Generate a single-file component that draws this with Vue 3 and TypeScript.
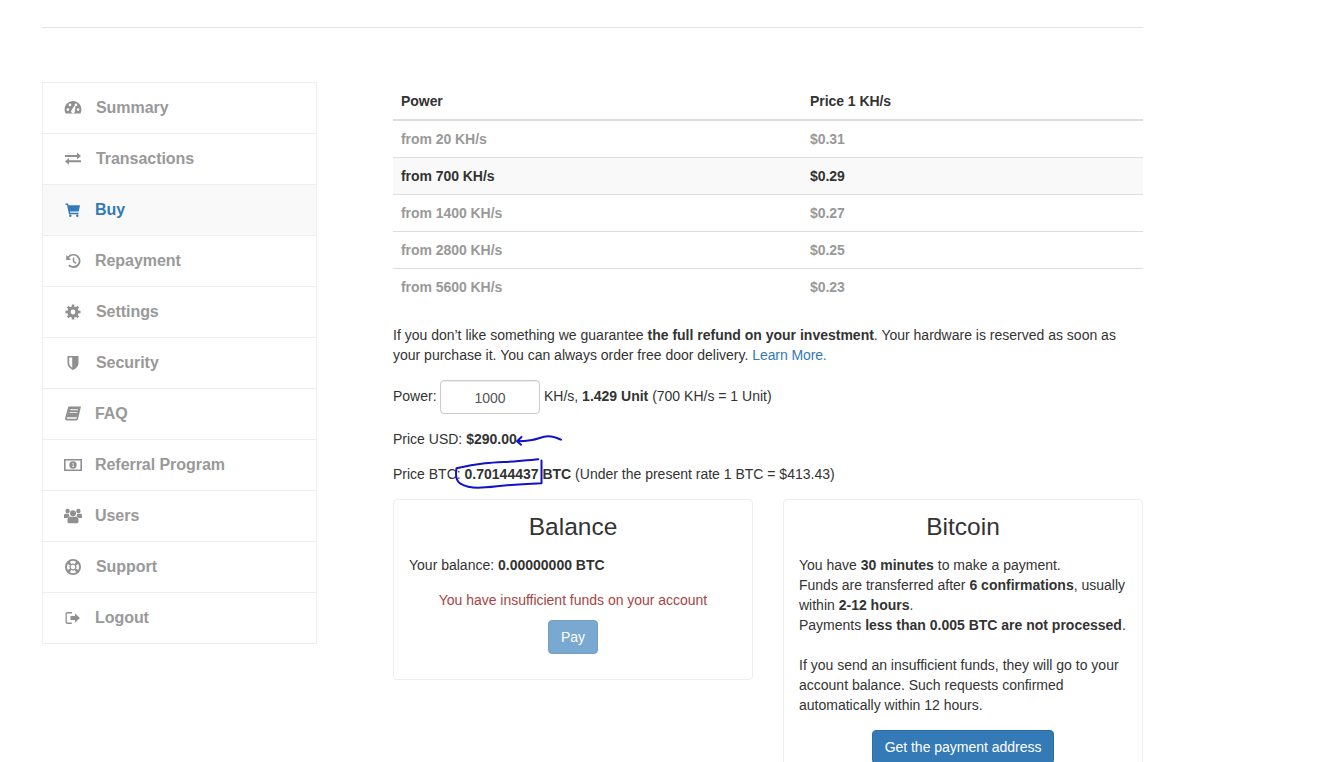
<script setup lang="ts">
function gear(cx: number, cy: number, ro: number, ri: number, hole: number, teeth: number): string {
  let d = ''
  const step = (Math.PI * 2) / teeth
  for (let i = 0; i < teeth; i++) {
    const a = i * step
    const pts: [number, number][] = [
      [ri, a - step * 0.5],
      [ri, a - step * 0.27],
      [ro, a - step * 0.2],
      [ro, a + step * 0.2],
      [ri, a + step * 0.27],
    ]
    for (const [r, t] of pts) {
      d += (d ? 'L' : 'M') + (cx + r * Math.cos(t)).toFixed(2) + ' ' + (cy + r * Math.sin(t)).toFixed(2)
    }
  }
  d += `Z M${cx - hole} ${cy} a${hole} ${hole} 0 1 0 ${hole * 2} 0 a${hole} ${hole} 0 1 0 ${-hole * 2} 0Z`
  return d
}

interface NavItem {
  label: string
  d: string
  wide?: boolean
  active?: boolean
}

const nav: NavItem[] = [
  {
    label: 'Summary',
    wide: true,
    d: 'M9 2C4.300 2 .6 5.800.6 10.500c0 1.400.3 2.600.9 3.700.1.2.3.3.5.3h14c.2 0 .4-.1.5-.3.6-1.100.9-2.300.9-3.700C17.400 5.800 13.700 2 9 2ZM3.900 11.900a1.300 1.300 0 1 1 0-2.600 1.300 1.300 0 0 1 0 2.600Zm2.100-4.700a1.300 1.300 0 1 1 0-2.600 1.300 1.300 0 0 1 0 2.600Zm4.800 5.800a1.900 1.900 0 1 1-3.300-1.800l3-4.700.9.300-.4 5.300c0 .3-.1.600-.2.900Zm1.200-5.800a1.300 1.300 0 1 1 0-2.600 1.300 1.300 0 0 1 0 2.600Zm2.100 4.700a1.300 1.300 0 1 1 0-2.600 1.300 1.300 0 0 1 0 2.600Z',
  },
  {
    label: 'Transactions',
    wide: true,
    d: 'M1 5h12V2.600L17 6l-4 3.200V7H1ZM17 10.200H5V8L1 11.400 5 14.800v-2.600h12Z',
  },
  {
    label: 'Buy',
    active: true,
    d: 'M1.500 2.500h2.600l.4 1.700H16l-1.300 6.300H5.900l.3 1.300h8.300v1.400H5l-2-9.300H1.500ZM6.300 13.500a1.200 1.200 0 1 1 0 2.400 1.200 1.200 0 0 1 0-2.400Zm7 0a1.200 1.200 0 1 1 0 2.400 1.200 1.200 0 0 1 0-2.400Z',
  },
  {
    label: 'Repayment',
    d: 'M9.500 2a7 7 0 1 1-5.200 11.700l1.300-1.200A5.300 5.300 0 1 0 5 5.900L7 7.900H2.200V2.900l1.600 1.500A7 7 0 0 1 9.500 2ZM8.800 5.500h1.500v3.700l2.300 1.500-.8 1.200-3-1.900Z',
  },
  { label: 'Settings', wide: true, d: gear(9, 9, 7.600, 5.600, 2.400, 8) },
  {
    label: 'Security',
    wide: true,
    d: 'M3.500 2h11v7.200c0 3.300-3.200 5.500-5.500 6.800-2.300-1.300-5.500-3.500-5.500-6.800ZM5.200 3.600V9.200c0 2 1.900 3.600 3 4.500V3.600Z',
  },
  {
    label: 'FAQ',
    d: 'M5 1.500h12l-3 12.500c-.2.800-.8 1.500-1.700 1.500H2.800C1.500 15.500.8 14.500 1.100 13.300L4 2.500c.1-.6.5-1 1-1ZM6.300 4.300l-.2.900h7.700l.2-.9Zm-.7 2.600-.2.900h7.700l.2-.9ZM3.600 12.200c-.6 0-.9.400-.9.800s.3.800.9.800h8.900l.5-1.600Z',
  },
  {
    label: 'Referral Program',
    d: 'M0 3h18v12H0ZM1.600 4.600v8.800h14.800V4.600ZM9 5.300a3.700 3.700 0 1 1 0 7.400 3.700 3.700 0 0 1 0-7.400ZM8.300 7.300v.7h.5v2.300h-.6v.7h1.700v-.7h-.4V7.300Z',
  },
  {
    label: 'Users',
    d: 'M3.600 1.800a2.200 2.200 0 1 1 0 4.400 2.200 2.200 0 0 1 0-4.400Zm10.800 0a2.200 2.200 0 1 1 0 4.400 2.200 2.200 0 0 1 0-4.400ZM9 3.200a3 3 0 1 1 0 6 3 3 0 0 1 0-6ZM0 11V8.300c0-1 .6-1.600 1.600-1.600h3c.2 1 .6 1.900 1.300 2.500-1.200.4-2.100 1-2.400 1.800Zm18 0V8.300c0-1-.6-1.600-1.600-1.600h-3c-.2 1-.6 1.900-1.300 2.500 1.200.4 2.100 1 2.400 1.800ZM6.300 9.700h5.400c1.800 0 2.800 1.100 2.800 2.800v2.200c0 .8-.7 1.500-1.500 1.500H5c-.8 0-1.500-.7-1.500-1.500v-2.200c0-1.700 1-2.800 2.800-2.800Z',
  },
  {
    label: 'Support',
    wide: true,
    d: 'M9 1a8 8 0 1 1 0 16A8 8 0 0 1 9 1Zm-3.100 2.700 1.300 2.200a3.700 3.700 0 0 1 3.600 0l1.300-2.200a6.200 6.200 0 0 0-6.200 0ZM3.700 5.900A6.200 6.200 0 0 0 3.700 12.100l2.200-1.300a3.700 3.700 0 0 1 0-3.600Zm2.200 8.400a6.200 6.200 0 0 0 6.200 0l-1.300-2.200a3.700 3.700 0 0 1-3.600 0Zm8.400-2.200a6.200 6.200 0 0 0 0-6.200l-2.200 1.300a3.700 3.700 0 0 1 0 3.600ZM9 6.700a2.300 2.300 0 1 0 0 4.600 2.300 2.300 0 0 0 0-4.600Z',
  },
  {
    label: 'Logout',
    d: 'M3.500 3H8v1.500H3.800c-.6 0-1 .4-1 1v7c0 .6.4 1 1 1h4V15H3.500c-1.200 0-2-.8-2-2V5c0-1.200.8-2 2-2ZM11 4.500 16 9l-5 4.500V11H6.500V7H11Z',
  },
]

const tiers = [
  { power: 'from 20 KH/s', price: '$0.31' },
  { power: 'from 700 KH/s', price: '$0.29', current: true },
  { power: 'from 1400 KH/s', price: '$0.27' },
  { power: 'from 2800 KH/s', price: '$0.25' },
  { power: 'from 5600 KH/s', price: '$0.23' },
]
</script>

<template>
  <div class="page">
    <hr class="rule" />
    <div class="layout">
      <ul class="side">
        <li v-for="item in nav" :key="item.label" class="side-item" :class="{ active: item.active, wide: item.wide }">
          <svg class="ico" viewBox="0 0 18 18" width="18" height="18" aria-hidden="true">
            <path :d="item.d" fill="currentColor" fill-rule="evenodd" />
          </svg>
          <span>{{ item.label }}</span>
        </li>
      </ul>

      <main class="main">
        <table class="rates">
          <thead>
            <tr><th class="c1">Power</th><th>Price 1 KH/s</th></tr>
          </thead>
          <tbody>
            <tr v-for="t in tiers" :key="t.power" :class="{ current: t.current }">
              <td>{{ t.power }}</td>
              <td>{{ t.price }}</td>
            </tr>
          </tbody>
        </table>

        <p class="para">
          If you don’t like something we guarantee <b>the full refund on your investment</b>. Your hardware is reserved as soon as
          your purchase it. You can always order free door delivery. <a class="link">Learn More.</a>
        </p>

        <div class="power">
          <span>Power:</span>
          <input class="field" value="1000" />
          <span>KH/s, <b>1.429 Unit</b> (700 KH/s = 1 Unit)</span>
        </div>

        <div class="prices">
          <p class="para">Price USD: <b>$290.00</b></p>
          <p class="para">Price BTC: <b class="btc">0.70144437 BTC</b> (Under the present rate 1 BTC = $413.43)</p>
          <svg class="ink" width="200" height="70" viewBox="0 0 200 70" aria-hidden="true">
            <path d="M168 10.700C164 9 160 7.200 155 7.300 149 7.500 145 10 139 11 134 11.800 130 12.200 124 12.200M128.500 8 124 12.200 128 15.700" />
            <path d="M63.500 39.300C75 36.500 85 35 92 34.300 105 33 118 33 125 32 132 31.500 140 31 145.300 30.300M148.500 31.500V54.300C135 54.800 125 55.500 118 56 105 57 95 58.800 85 58.800 78 58.800 72 57.300 67 54.300 63.500 52 62.200 47 63.500 39.300" />
          </svg>
        </div>

        <div class="cards">
          <section class="card">
            <h3>Balance</h3>
            <p class="para">Your balance: <b>0.00000000 BTC</b></p>
            <p class="para err">You have insufficient funds on your account</p>
            <p class="act"><button class="btn off">Pay</button></p>
          </section>
          <section class="card">
            <h3>Bitcoin</h3>
            <p class="para">
              You have <b>30 minutes</b> to make a payment.<br />
              Funds are transferred after <b>6 confirmations</b>, usually within <b>2-12 hours</b>.<br />
              Payments <b>less than 0.005 BTC are not processed</b>.<br /><br />
              If you send an insufficient funds, they will go to your account balance. Such requests confirmed automatically within 12 hours.
            </p>
            <p class="act"><button class="btn">Get the payment address</button></p>
          </section>
        </div>
      </main>
    </div>
  </div>
</template>

<style>
html, body { margin: 0; overflow: hidden; background: #fff; }
</style>

<style scoped>
.page {
  height: 762px;
  overflow: hidden;
  box-sizing: border-box;
  padding: 27px 0 0 42px;
  width: 1143px;
  font: 14px/20px "Liberation Sans", Arial, sans-serif;
  color: #333;
}
.rule { margin: 0 0 54px; border: 0; border-top: 1px solid #e3e3e3; }
.layout { display: flex; align-items: flex-start; gap: 76px; }
.side {
  flex: 0 0 275px;
  box-sizing: border-box;
  margin: 0;
  padding: 0;
  list-style: none;
  border: 1px solid #eee;
  border-bottom: 0;
}
.side-item {
  display: flex;
  align-items: center;
  gap: 13px;
  height: 50px;
  padding-left: 21px;
  border-bottom: 1px solid #eee;
  font-size: 16px;
  font-weight: 700;
  letter-spacing: -.05px;
  color: #999;
}
.side-item.wide { gap: 14px; }
.side-item.active { background: #f9f9f9; color: #337ab7; }
.side-item:not(.active) .ico { color: #909090; }
.ico { flex: none; }
.main { flex: 1; min-width: 0; padding-top: 1px; }
.rates { width: 100%; border-collapse: collapse; margin-bottom: 20px; table-layout: fixed; }
.rates th, .rates td { padding: 8px; text-align: left; font-weight: 700; line-height: 20px; letter-spacing: -.05px; }
.rates th { border-bottom: 2px solid #ddd; color: #333; }
.rates .c1 { width: 409px; box-sizing: border-box; }
.rates td { border-top: 1px solid #ddd; color: #999; }
.rates tbody tr:first-child td { border-top: 0; }
.rates .current td { background: #f9f9f9; color: #333; }
.para { margin: 0 0 15px; }
.link { color: #337ab7; letter-spacing: -.1px; }
.power { display: flex; align-items: center; gap: 4px; margin-bottom: 15px; }
.power span { padding-bottom: 2px; }
.field {
  box-sizing: border-box;
  width: 100px;
  height: 34px;
  margin-left: -.6px;
  padding: 2px 12px 0;
  border: 1px solid #ccc;
  border-radius: 4px;
  font: inherit;
  color: #555;
  text-align: center;
  box-shadow: inset 0 1px 1px rgba(0, 0, 0, .075);
}
.prices { position: relative; }
.ink {
  position: absolute;
  left: 0;
  top: 0;
  fill: none;
  stroke: #1212c8;
  stroke-width: 2;
  stroke-linecap: round;
  stroke-linejoin: round;
}
.cards { display: flex; align-items: flex-start; gap: 30px; }
.card {
  flex: 1;
  min-width: 0;
  padding: 14px 15px 0;
  border: 1px solid #eee;
  border-radius: 4px;
}
.card h3 { margin: 0 0 15px; font-size: 24.500px; font-weight: 500; line-height: 26.4px; text-align: center; }
.card .para.err { margin-bottom: 10px; text-align: center; color: #a94442; letter-spacing: -.02px; }
.act { margin: 0 0 25px; text-align: center; }
.btn {
  height: 34px;
  padding: 6px 12px;
  border: 1px solid #2e6da4;
  border-radius: 4px;
  background: #337ab7;
  color: #fff;
  font: inherit;
  letter-spacing: -.02px;
}
.off { opacity: .65; }
</style>
